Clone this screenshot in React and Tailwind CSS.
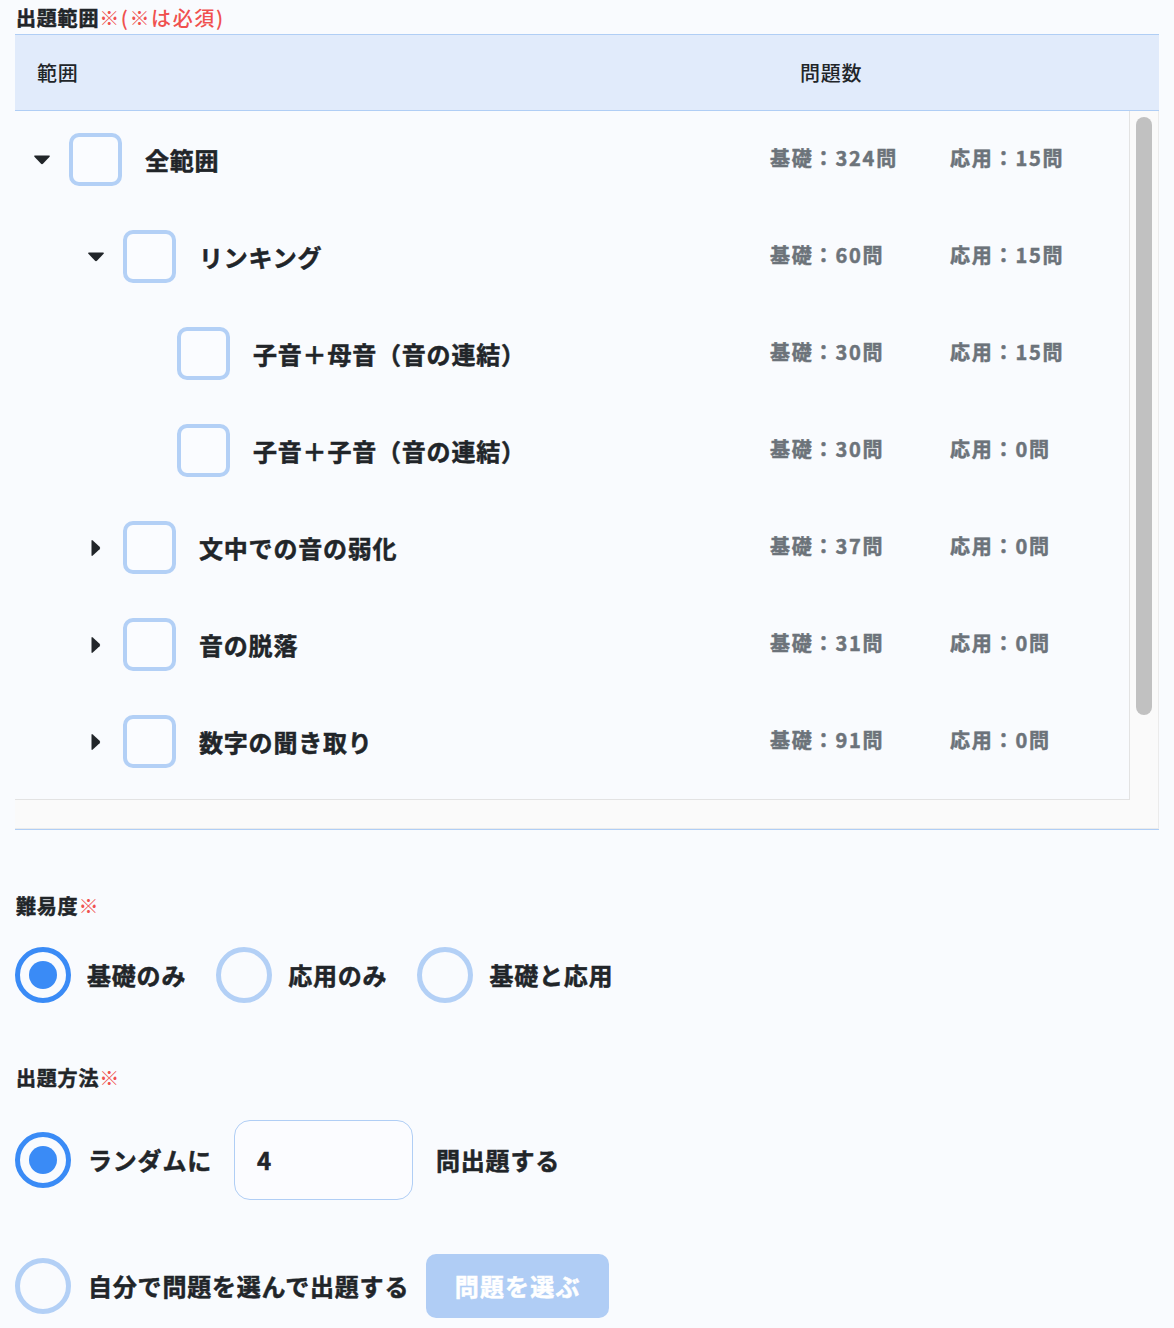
import React from "react";

const rows = [
  { depth: 0, caret: "down", label: "全範囲", basic: "基礎：324問", adv: "応用：15問" },
  { depth: 1, caret: "down", label: "リンキング", basic: "基礎：60問", adv: "応用：15問" },
  { depth: 2, caret: null, label: "子音＋母音（音の連結）", basic: "基礎：30問", adv: "応用：15問" },
  { depth: 2, caret: null, label: "子音＋子音（音の連結）", basic: "基礎：30問", adv: "応用：0問" },
  { depth: 1, caret: "right", label: "文中での音の弱化", basic: "基礎：37問", adv: "応用：0問" },
  { depth: 1, caret: "right", label: "音の脱落", basic: "基礎：31問", adv: "応用：0問" },
  { depth: 1, caret: "right", label: "数字の聞き取り", basic: "基礎：91問", adv: "応用：0問" },
];

const indentClass = ["pl-[18px]", "pl-[72px]", "pl-[126px]"];
const heavy = "font-bold [-webkit-text-stroke:0.5px_currentColor]";

function Caret({ dir }) {
  if (dir === "down") {
    return (
      <svg width="18" height="11" viewBox="0 0 18 11" className="block">
        <path d="M2 1.5 H16 Q17.5 1.5 16.6 2.8 L10.2 9.6 Q9 10.8 7.8 9.6 L1.4 2.8 Q0.5 1.5 2 1.5 Z" fill="#212529" />
      </svg>
    );
  }
  if (dir === "right") {
    return (
      <svg width="12" height="18" viewBox="0 0 12 18" className="block ml-[3px]">
        <path d="M1.5 2 V16 Q1.5 17.5 2.8 16.6 L9.6 10.2 Q10.8 9 9.6 7.8 L2.8 1.4 Q1.5 0.5 1.5 2 Z" fill="#212529" />
      </svg>
    );
  }
  return null;
}

function Radio({ checked }) {
  return (
    <div
      className={
        "w-[56px] h-[56px] shrink-0 rounded-full border-[5px] flex items-center justify-center " +
        (checked ? "border-[#3a8bf6]" : "border-[#b3d0f6]")
      }
    >
      {checked && <div className="w-[28px] h-[28px] rounded-full bg-[#3a8bf6]" />}
    </div>
  );
}

export default function App() {
  return (
    <div className="min-h-screen bg-[#f9fbfe] text-[#212529] font-['Noto_Sans_CJK_JP','Noto_Sans',sans-serif] tracking-[0.05em] px-[15px] pb-[10px]">
      <div className="h-[34px] flex items-center text-[20px] leading-none pt-[2px]">
        <span className={"ml-[1px] " + heavy}>出題範囲</span>
        <span className="text-[#f0514f] font-medium tracking-[0.08em]">※(※は必須)</span>
      </div>

      {/* table */}
      <div className="border-t border-b border-[#b0cef5]">
        <div className="h-[76px] bg-[#e1ebfb] border-b border-[#b0cef5] flex items-center text-[20px] font-medium">
          <div className="w-[785px] pl-[22px]">範囲</div>
          <div>問題数</div>
        </div>
        <div className="bg-[#fafafa] border-r border-b border-[#ebebeb]">
          <div className="flex">
            <div className="flex-1 h-[689px] bg-[#f9fbfe] border-r border-b border-[#e3e3e3] flex flex-col">
              {rows.map((r, i) => (
                <div key={i} className="h-[97px] shrink-0 flex items-center">
                  <div className={"w-[755px] flex items-center " + indentClass[r.depth]}>
                    <div className="w-[18px] flex items-center">
                      <Caret dir={r.caret} />
                    </div>
                    <div className="ml-[18px] w-[53px] h-[53px] rounded-[10px] border-[4.5px] border-[#b3d0f6] bg-[#fafcff] shrink-0" />
                    <div className={"ml-[23px] text-[24px] leading-none " + heavy}>{r.label}</div>
                  </div>
                  <div className={"w-[180px] text-[20px] tracking-[0.09em] text-[#6c737a] leading-none -mt-[4px] " + heavy}>{r.basic}</div>
                  <div className={"text-[20px] tracking-[0.09em] text-[#6c737a] leading-none -mt-[4px] " + heavy}>{r.adv}</div>
                </div>
              ))}
            </div>
            <div className="w-[28px] shrink-0 pt-[6px] flex justify-center">
              <div className="w-[16px] h-[598px] rounded-full bg-[#c1c1c1]" />
            </div>
          </div>
          <div className="h-[28px]" />
        </div>
      </div>

      {/* difficulty */}
      <div className="mt-[62px] h-[28px] flex items-center text-[20px] leading-none">
        <span className={"ml-[1px] " + heavy}>難易度</span>
        <span className="text-[#f0514f] font-medium">※</span>
      </div>
      <div className="mt-[27px] flex items-center">
        <Radio checked />
        <span className={"ml-[16px] text-[24px] leading-none " + heavy}>基礎のみ</span>
        <div className="ml-[30px]"><Radio /></div>
        <span className={"ml-[16px] text-[24px] leading-none " + heavy}>応用のみ</span>
        <div className="ml-[30px]"><Radio /></div>
        <span className={"ml-[16px] text-[24px] leading-none " + heavy}>基礎と応用</span>
      </div>

      {/* method */}
      <div className="mt-[61px] h-[28px] flex items-center text-[20px] leading-none">
        <span className={"ml-[1px] " + heavy}>出題方法</span>
        <span className="text-[#f0514f] font-medium">※</span>
      </div>
      <div className="mt-[28px] flex items-center">
        <Radio checked />
        <span className={"ml-[17px] text-[24px] leading-none " + heavy}>ランダムに</span>
        <div className={"ml-[22px] w-[179px] h-[80px] rounded-[16px] border border-[#b0cef5] bg-[#fbfcff] flex items-center pl-[22px] text-[24px] " + heavy}>
          4
        </div>
        <span className={"ml-[23px] text-[24px] leading-none " + heavy}>問出題する</span>
      </div>
      <div className="mt-[54px] flex items-center">
        <Radio />
        <span className={"ml-[17px] text-[24px] leading-none " + heavy}>自分で問題を選んで出題する</span>
        <button className={"ml-[17px] w-[183px] h-[64px] rounded-[10px] bg-[#b0cdf5] text-white text-[24px] tracking-[0.05em] flex items-center justify-center " + heavy}>
          問題を選ぶ
        </button>
      </div>
    </div>
  );
}
